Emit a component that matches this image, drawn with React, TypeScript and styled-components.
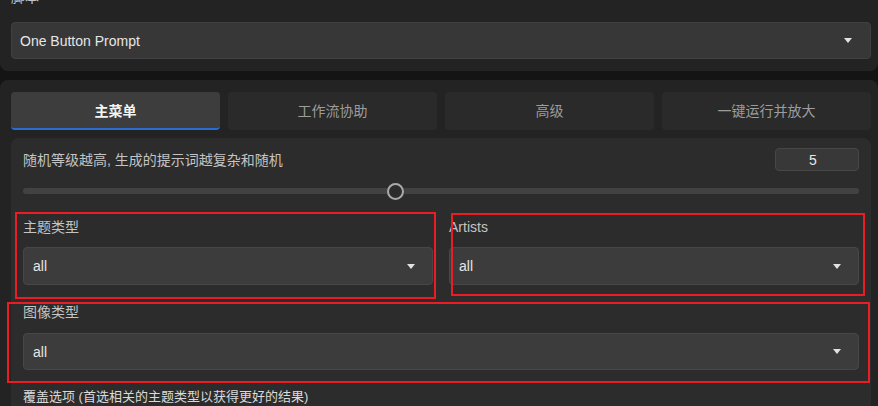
import React from "react";
import styled, { createGlobalStyle } from "styled-components";

const Global = createGlobalStyle`
  html, body { margin: 0; padding: 0; background: #141414; }
  * { box-sizing: border-box; }
`;

const Page = styled.div`
  position: relative;
  width: 878px;
  height: 406px;
  overflow: hidden;
  background: #141414;
  font-family: "Liberation Sans", "Noto Sans CJK SC", sans-serif;
  font-size: 14px;
  color: #c8c8c8;
`;

const TopPanel = styled.section`
  margin-top: -14px;
  padding: 2px 7px 12px 11px;
  background: #232323;
  border-radius: 0 0 8px 8px;
  display: flex;
  flex-direction: column;
  gap: 16px;
`;

const Label = styled.div<{ $bright?: boolean }>`
  line-height: 18px;
  height: 18px;
  color: ${(p) => (p.$bright ? "#dadada" : "#c4c4c4")};
  white-space: nowrap;
`;

const FieldLabel = styled(Label)`
  line-height: 20px;
  height: 20px;
`;

const Select = styled.div<{ $h: number; $top?: boolean }>`
  height: ${(p) => p.$h}px;
  background: ${(p) => (p.$top ? "#373737" : "#3c3c3c")};
  border: 1px solid ${(p) => (p.$top ? "#404040" : "#474747")};
  border-radius: 4px;
  display: flex;
  align-items: center;
  justify-content: space-between;
  padding: 0 ${(p) => (p.$top ? 18 : 17)}px 0 ${(p) => (p.$top ? 8 : 9)}px;
  color: #e6e6e6;
  font-size: 14px;
`;

const MainPanel = styled.section`
  margin-top: 9px;
  padding: 12px 7px 0 11px;
  background: #232323;
  border-radius: 8px 8px 0 0;
  display: flex;
  flex-direction: column;
  gap: 8px;
  height: 340px;
`;

const Tabs = styled.div`
  display: grid;
  grid-template-columns: repeat(4, 1fr);
  gap: 8px;
`;

const Tab = styled.div<{ $active?: boolean }>`
  height: 38px;
  border-radius: 4px;
  display: flex;
  align-items: center;
  justify-content: center;
  font-size: 14px;
  background: ${(p) => (p.$active ? "#3d3d3d" : "#2a2a2a")};
  color: ${(p) => (p.$active ? "#f4f4f4" : "#9c9c9c")};
  font-weight: ${(p) => (p.$active ? 700 : 400)};
  border-bottom: 2px solid ${(p) => (p.$active ? "#2b6cd0" : "transparent")};
`;

const Inner = styled.div`
  background: #2c2c2c;
  border-radius: 8px;
  padding: 10px 12px 0 12px;
  display: flex;
  flex-direction: column;
  flex: 1;
`;

const HeadRow = styled.div`
  height: 23px;
  display: flex;
  align-items: center;
  justify-content: space-between;
`;

const NumberBox = styled.div`
  width: 84px;
  height: 23px;
  background: #383838;
  border: 1px solid #474747;
  border-radius: 4px;
  display: flex;
  align-items: center;
  justify-content: center;
  padding-right: 8px;
  color: #e8e8e8;
  font-size: 14px;
`;

const Range = styled.input`
  -webkit-appearance: none;
  appearance: none;
  margin: 10px 0 0 0;
  width: 100%;
  height: 20px;
  background: transparent;
  display: block;

  &::-webkit-slider-runnable-track {
    height: 6px;
    background: #424242;
    border-radius: 3px;
  }
  &::-webkit-slider-thumb {
    -webkit-appearance: none;
    box-sizing: border-box;
    width: 17px;
    height: 17px;
    margin-top: -5.5px;
    border-radius: 50%;
    border: 2px solid #a9a9a9;
    background: #2c2c2c;
  }
`;

const GroupRow = styled.div`
  margin-top: 16px;
  display: grid;
  grid-template-columns: 1fr 1fr;
  gap: 16px;
`;

const Field = styled.div<{ $gap: number; $mt?: number }>`
  display: flex;
  flex-direction: column;
  gap: ${(p) => p.$gap}px;
  margin-top: ${(p) => p.$mt ?? 0}px;
`;

const Footer = styled(FieldLabel)`
  margin-top: 17px;
  font-size: 13px;
`;

const Mark = styled.div`
  position: absolute;
  border: 2px solid #ec1c24;
  pointer-events: none;
`;

const Caret = () => (
  <svg width="8" height="5" viewBox="0 0 8 5">
    <polygon points="0,0 8,0 4,5" fill="#e2e2e2" />
  </svg>
);

export default function App() {
  return (
    <Page>
      <Global />
      <TopPanel>
        <Label>脚本</Label>
        <Select $h={37} $top>
          <span>One Button Prompt</span>
          <Caret />
        </Select>
      </TopPanel>
      <MainPanel>
        <Tabs>
          <Tab $active>主菜单</Tab>
          <Tab>工作流协助</Tab>
          <Tab>高级</Tab>
          <Tab>一键运行并放大</Tab>
        </Tabs>
        <Inner>
          <HeadRow>
            <Label>随机等级越高, 生成的提示词越复杂和随机</Label>
            <NumberBox>5</NumberBox>
          </HeadRow>
          <Range type="range" min={1} max={10} defaultValue={5} />
          <GroupRow>
            <Field $gap={10}>
              <FieldLabel>主题类型</FieldLabel>
              <Select $h={38}>
                <span>all</span>
                <Caret />
              </Select>
            </Field>
            <Field $gap={10}>
              <FieldLabel>Artists</FieldLabel>
              <Select $h={38}>
                <span>all</span>
                <Caret />
              </Select>
            </Field>
          </GroupRow>
          <Field $gap={11} $mt={17}>
            <FieldLabel>图像类型</FieldLabel>
            <Select $h={37}>
              <span>all</span>
              <Caret />
            </Select>
          </Field>
          <Footer $bright>覆盖选项 (首选相关的主题类型以获得更好的结果)</Footer>
        </Inner>
      </MainPanel>
      <Mark style={{ left: 15, top: 212, width: 421, height: 87 }} />
      <Mark style={{ left: 451, top: 213, width: 414, height: 83 }} />
      <Mark style={{ left: 7, top: 302, width: 863, height: 81 }} />
    </Page>
  );
}
